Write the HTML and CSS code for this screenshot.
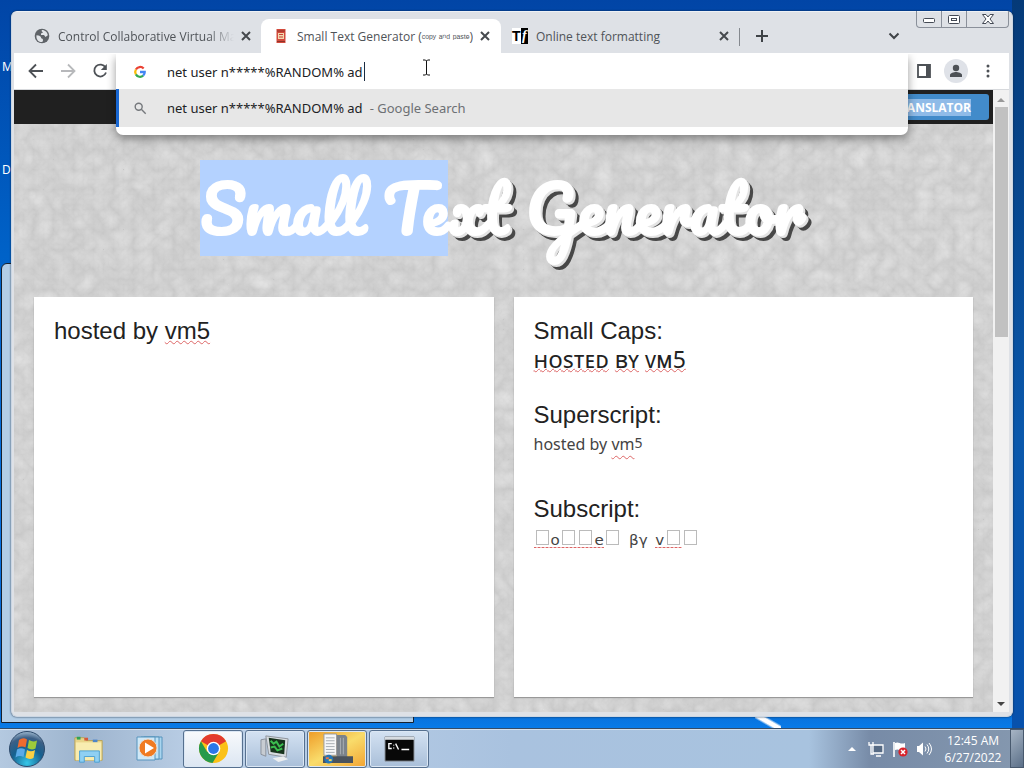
FILE: index.html
```html
<!DOCTYPE html>
<html lang="en">
<head>
<meta charset="utf-8">
<meta name="viewport" content="width=device-width, initial-scale=1">
<title>Small Text Generator</title>
<link rel="stylesheet" href="styles.css">
</head>
<body>
<div class="screen">
  <main class="desktop">
    <span class="desk-label label-top">My Computer</span>
    <span class="desk-label label-mid">Desktop</span>
    <div class="back-window"></div>
    <div class="streak"></div>

    <section class="window">
      <div class="caption">
        <button class="cap-btn" aria-label="Minimize"><svg width="14" height="10" viewBox="0 0 14 10"><rect x="1.500" y="4.500" width="11" height="4" rx="1" fill="#fff" stroke="#444a55"/></svg></button>
        <button class="cap-btn" aria-label="Restore"><svg width="14" height="11" viewBox="0 0 14 11"><rect x="1.500" y="1.500" width="11" height="8" rx="1" fill="#fff" stroke="#444a55"/><rect x="4.500" y="4.500" width="5" height="2" fill="#fff" stroke="#444a55"/></svg></button>
        <button class="cap-btn cap-close" aria-label="Close"><svg width="14" height="12" viewBox="0 0 14 12"><path d="M1.500 1.500h3.500l2 2.500 2-2.500h3.500L9 6l3.500 4.500H9L7 8l-2 2.500H1.500L5 6z" fill="#fff" stroke="#444a55"/></svg></button>
      </div>

      <header class="tabs">
        <div class="tab tab-first">
          <svg class="favicon" viewBox="0 0 16 16"><circle cx="8" cy="8" r="7.300" fill="#5f6368"/><path d="M2.500 7.200C4 7.200 7 8 7 9.500S9 10 9 12s-1 2-1.500 2C4 14 2 11 2.500 7.200zM8 2c3 0 5.500 2.500 5.800 5.200L11.500 9 10 7H7V5.500L9 4.500 7.500 3z" fill="#e2e5e9"/></svg>
          <span class="tab-title fade">Control Collaborative Virtual Mac</span>
          <button class="x" aria-label="Close tab"><svg viewBox="0 0 10 10"><path d="M1 1l8 8M9 1L1 9"/></svg></button>
        </div>
        <div class="tab tab-active">
          <svg class="favicon" viewBox="0 0 16 16"><path d="M3.500 1h9v14h-9z" fill="#d34a3c"/><path d="M5 5h6v6H5z" fill="#f3d9b0"/><path d="M4 3h8M4 13.500h8" stroke="#8f3229"/><path d="M6 6.500h4M6 9h4" stroke="#c4473a"/></svg>
          <span class="tab-title">Small Text Generator (<span class="tiny">ᶜᵒᵖʸ ᵃⁿᵈ ᵖᵃˢᵗᵉ</span>)</span>
          <button class="x" aria-label="Close tab"><svg viewBox="0 0 10 10"><path d="M1 1l8 8M9 1L1 9"/></svg></button>
        </div>
        <div class="tab tab-last">
          <span class="tf"><b>T</b><i>f</i></span>
          <span class="tab-title">Online text formatting</span>
          <button class="x" aria-label="Close tab"><svg viewBox="0 0 10 10"><path d="M1 1l8 8M9 1L1 9"/></svg></button>
        </div>
        <button class="new-tab" aria-label="New tab"><svg viewBox="0 0 12 12"><path d="M6 0v12M0 6h12"/></svg></button>
        <button class="tab-menu" aria-label="Search tabs"><svg viewBox="0 0 12 8"><path d="M1.500 1.500L6 6l4.500-4.500"/></svg></button>
      </header>

      <nav class="toolbar">
        <button class="tool" aria-label="Back"><svg viewBox="0 0 16 16"><path d="M15 8H2M8 1.500L1.500 8 8 14.500"/></svg></button>
        <button class="tool dim" aria-label="Forward"><svg viewBox="0 0 16 16"><path d="M1 8h13M8 1.500L14.500 8 8 14.500"/></svg></button>
        <button class="tool" aria-label="Reload"><svg viewBox="0 0 16 16"><path d="M13.500 4.500A6 6 0 1 0 14 9.500"/><path d="M14.800 1v6h-6z" fill="#4d5156" stroke="none"/></svg></button>
        <span class="grow"></span>
        <button class="tool" aria-label="Side panel"><svg viewBox="0 0 16 16"><path d="M2 2h12v12H2z"/><path d="M10 2h4v12h-4z" fill="#4d5156" stroke="none"/></svg></button>
        <button class="tool avatar" aria-label="Profile"><svg viewBox="0 0 16 16"><g fill="#4d5156" stroke="none"><circle cx="8" cy="5" r="3.200"/><path d="M2 14v-2c0-2 4-3 6-3s6 1 6 3v2z"/></g></svg></button>
        <button class="tool" aria-label="Menu"><svg viewBox="0 0 16 16"><g fill="#4d5156" stroke="none"><circle cx="8" cy="3" r="1.500"/><circle cx="8" cy="8" r="1.500"/><circle cx="8" cy="13" r="1.500"/></g></svg></button>
      </nav>

      <form class="omnibox">
        <label class="omni-row">
          <svg class="omni-icon" viewBox="0 0 16 16" fill="none" stroke-width="2.600"><path d="M12.200 4A5.500 5.500 0 0 0 3.300 5.200" stroke="#ea4335"/><path d="M3.300 5.200a5.500 5.500 0 0 0 0 5.600" stroke="#fbbc05"/><path d="M3.300 10.800a5.500 5.500 0 0 0 8.300 1.400" stroke="#34a853"/><path d="M11.600 12.200A5.500 5.500 0 0 0 13.400 8H8" stroke="#4285f4"/></svg>
          <input class="omni-input" type="text" aria-label="Address and search bar" value="net user n*****%RANDOM% ad">
          <span class="caret"></span>
        </label>
        <a class="omni-row suggestion" href="#">
          <svg class="omni-icon" viewBox="0 0 16 16" fill="none" stroke="#75787c" stroke-width="1.600"><circle cx="6.500" cy="6.500" r="4"/><path d="M9.500 9.500l5 5"/></svg>
          <span class="query">net user n*****%RANDOM% ad</span><span class="engine">- Google Search</span>
        </a>
      </form>
      <svg class="ibeam" viewBox="0 0 9 17"><path d="M1 1h2.500l1 1 1-1H8M4.500 2v13M1 16h2.500l1-1 1 1H8" fill="none" stroke="#111"/></svg>

      <div class="view">
        <article class="page">
          <svg class="texture" aria-hidden="true"><filter id="grain" x="0" y="0" width="100%" height="100%" color-interpolation-filters="sRGB"><feTurbulence type="turbulence" baseFrequency="0.050" numOctaves="4" seed="7"/><feColorMatrix values="0.09 0.05 0 0 0.775  0.09 0.05 0 0 0.775  0.09 0.05 0 0 0.775  0 0 0 0 1"/></filter><rect width="100%" height="100%" filter="url(#grain)"/></svg>
          <div class="site-bar"><a class="translator" href="#"><span>TRANSLATOR</span></a></div>
          <h1 class="title"><span class="selected">Small Te</span>xt Generator</h1>
          <div class="panels">
            <div class="panel"><p>hosted by <u>vm5</u></p></div>
            <div class="panel">
              <p>Small Caps:</p>
              <p class="caps"><u>ʜᴏsᴛᴇᴅ</u> <u>ʙʏ</u> <u>ᴠᴍ5</u></p>
              <p class="heading">Superscript:</p>
              <p class="super">hosted by <u>vm</u><small>5</small></p>
              <p class="heading-sub">Subscript:</p>
              <p class="sub"><span class="wavy"><i class="box"></i>ₒ<i class="box"></i><i class="box"></i>ₑ</span><i class="box"></i> <span class="greek">ᵦᵧ</span> <span class="wavy">ᵥ<i class="box"></i></span><i class="box"></i></p>
            </div>
          </div>
        </article>
        <div class="scroll"><span class="arrow up"></span><span class="thumb"></span><span class="arrow down"></span></div>
      </div>
    </section>
  </main>

  <footer class="taskbar">
    <button class="start" aria-label="Start"><svg viewBox="0 0 38 38"><defs><radialGradient id="orb" cx=".5" cy=".9" r=".9"><stop offset="0" stop-color="#35c6e8"/><stop offset=".5" stop-color="#16608f"/><stop offset=".8" stop-color="#3c5f85"/><stop offset="1" stop-color="#9db8cf"/></radialGradient></defs><circle cx="19" cy="19" r="17.500" fill="url(#orb)" stroke="#2d4a6b"/><path d="M11 10q4-3 8-.5l-1.500 8q-4-2-8 .5z" fill="#ee6b2f"/><path d="M21 10q4 2.500 8 .5l-1.500 8q-4 2-8-.5z" fill="#9ccb3b"/><path d="M9 19.500q4-2.500 8 0L15.500 27q-4-2-8 .5z" fill="#5baae8"/><path d="M19 20q4 2.500 8 0l-1.500 8q-4 2-8-.5z" fill="#fbd043"/></svg></button>
    <button class="pin" aria-label="Windows Explorer"><svg viewBox="0 0 34 30"><path d="M2 3h10l2 3h17v21H2z" fill="#e9d58a" stroke="#b7a35a"/><path d="M4 2h4v3H4z" fill="#31a354"/><path d="M12 3h4v3h-4z" fill="#d65a3a"/><path d="M21 5h5v3h-5z" fill="#4d86c8"/><path d="M3 8h27v19H3z" fill="#f8ecb0"/><path d="M7 29V17h21v12h-5v-6H12v6z" fill="#8fd0f3" stroke="#4a9fd2"/></svg></button>
    <button class="pin" aria-label="Media Player"><svg viewBox="0 0 30 30"><path d="M9 3h18v22H9z" fill="#a9d5ef" stroke="#5794bd"/><path d="M6 3h18v22H6z" fill="#bfe2f6" stroke="#5794bd"/><path d="M2 3h18v23H2z" fill="#cfe8f7" stroke="#5794bd"/><circle cx="13" cy="14" r="9" fill="#f07b22" stroke="#e5ded6"/><path d="M10 8.500l9 5.500-9 5.500z" fill="#fff"/></svg></button>
    <button class="task task-on" aria-label="Google Chrome"><svg viewBox="0 0 32 32"><circle cx="16" cy="16" r="15" fill="#fbc118"/><path d="M16 16L3 8.500a15 15 0 0 1 26 0z" fill="#e33b2e"/><path d="M3 8.500A15 15 0 0 0 15 31l6.500-11L16 16 9.500 19.700z" fill="#269a4b"/><circle cx="16" cy="16" r="7" fill="#fff"/><circle cx="16" cy="16" r="5.600" fill="#2b77e7"/></svg></button>
    <button class="task" aria-label="System monitor"><svg viewBox="0 0 32 32"><path d="M1 7l5-1v18l-5-2z" fill="#c7ccd2" stroke="#8a929c"/><path d="M6 3l23 3-2 19L9 22z" fill="#d8dce0" stroke="#8d949c"/><path d="M9 5l17 2.500L25 22l-14-2.500z" fill="#17331d"/><path d="M11 8l3 3 3-2 3 5 4-3M11 15l4-1 3 4 5-2" fill="none" stroke="#3bbd4e" stroke-width="2"/><path d="M13 26l11-2 5 3-10 3z" fill="#eceef0"/></svg></button>
    <button class="task task-hot" aria-label="Taskbar settings"><svg viewBox="0 0 32 32"><path d="M15 2h9l2 2v21H15z" fill="#7b838b"/><path d="M19 5v17M22 5v17" stroke="#a9afb5"/><path d="M2 1h13v22H2z" fill="#f6f7f7" stroke="#999"/><path d="M4 5h9M4 8h9M4 11h9M4 14h9M4 17h9M4 20h9" stroke="#a7adb3"/><path d="M1 24h31v7H1z" fill="#4b535c"/><circle cx="7" cy="27" r="4.500" fill="#2675b5"/><path d="M4 25h3v2H4z" fill="#ee7440"/><path d="M7 27h3v2H7z" fill="#f7d648"/></svg></button>
    <button class="task" aria-label="Command Prompt"><svg viewBox="0 0 32 28"><path d="M1 2h30v25H1z" fill="#080808" stroke="#8d959e"/><path d="M1 2h30v3H1z" fill="#d7dce1"/><path d="M8 9H5v5h3M10 10v1M10 13v1M12 9l3 6M18 15h8" fill="none" stroke="#fff" stroke-width="1.400"/></svg></button>
    <span class="grow"></span>
    <div class="tray">
      <span class="arrow tray-up"></span>
      <svg viewBox="0 0 16 16"><g fill="#566a84" stroke="#fff" stroke-width="1.300"><path d="M5 4h10v8H5zM8 15h5"/><path d="M1 1v3h4V1M3 4v9h3" fill="none"/></g></svg>
      <svg viewBox="0 0 16 16"><path d="M2 1v15" stroke="#fff" stroke-width="1.600"/><path d="M3 2c4-2 5 2 10 0v7c-5 2-6-2-10 0z" fill="#fff"/><circle cx="11" cy="11" r="4.600" fill="#d8232b"/><path d="M9 9l4 4M13 9l-4 4" stroke="#fff" stroke-width="1.500"/></svg>
      <svg viewBox="0 0 16 16"><path d="M1 5h2l4-3.500v13L3 11H1z" fill="#fff"/><path d="M9 5.500q2 2.500 0 5M11 3.500q3.500 4.500 0 9M13 2q5 6 0 12" fill="none" stroke="#fff"/></svg>
    </div>
    <time class="clock">12:45 AM<br>6/27/2022</time>
    <button class="show-desktop" aria-label="Show desktop"></button>
  </footer>
</div>
</body>
</html>
```
FILE: styles.css
```css
* { box-sizing: border-box; }
body { margin: 0; font-family: "Noto Sans", "Open Sans", sans-serif; font-size: 12px; color: #202124; }
button { border: 0; padding: 0; background: none; font: inherit; display: flex; align-items: center; justify-content: center; flex: none; }
p, h1 { margin: 0; font-weight: 400; }
.grow { flex: 1; }

.screen { height: 100vh; display: grid; grid-template-rows: 1fr 40px; }
.desktop { position: relative; display: flex; padding: 11px; background: linear-gradient(#0145a6, #0062c8 35%, #0873e4 75%, #0a5fc4 95%, #087be8); overflow: hidden; min-height: 0; }
.desktop::after { content: ""; position: absolute; z-index: 0; right: 0; top: 0; bottom: 0; width: 12px; background: linear-gradient(#053a78, #0a58ac 60%, #0751ac); }
.desk-label { position: absolute; left: 2px; color: #fff; white-space: nowrap; }
.label-top { top: 58px; }
.label-mid { top: 161px; }
.back-window { position: absolute; left: 1px; bottom: 5px; width: 413px; height: 460px; background: #b2cde6; border: 1px solid #17212e; border-radius: 6px 6px 0 0; }
.streak { position: absolute; left: 755px; bottom: 0; width: 26px; height: 11px; background: linear-gradient(30deg, transparent 35%, #fff 45%, #fff 60%, transparent 70%); }

.window { position: relative; z-index: 1; flex: 1; min-width: 0; display: flex; flex-direction: column; padding: 0 3px 4px 2px; background: #dee1e6; border: 1px solid #cbd6e3; border-top-color: #eef1f5; border-radius: 6px; box-shadow: 0 0 2px #10233c; }
.caption { position: absolute; right: 3px; top: -1px; display: flex; height: 17px; border: 1px solid #8a909a; border-top: 0; border-radius: 0 0 4px 4px; }
.cap-btn { width: 25px; border-right: 1px solid #8a909a; }
.cap-close { width: 41px; border-right: 0; }

.tabs { display: flex; height: 41px; padding: 7px 0 0 20px; flex: none; align-items: stretch; }
.tab { display: flex; align-items: center; min-width: 0; color: #4f5358; font-family: "Open Sans", sans-serif; }
.tab-first { width: 227px; }
.tab-active { width: 240px; padding-left: 12px; background: #fff; border-radius: 8px 8px 0 0; }
.tab-last { width: 239px; padding: 0 8px 0 11px; position: relative; }
.tab-last::after { content: ""; position: absolute; right: 0; top: 9px; height: 18px; width: 1px; background: #85898f; }
.favicon { width: 16px; height: 16px; flex: none; margin-right: 8px; }
.tab-title { flex: 1; min-width: 0; white-space: nowrap; overflow: hidden; }
.fade { -webkit-mask-image: linear-gradient(90deg, #000 85%, transparent); mask-image: linear-gradient(90deg, #000 85%, transparent); }
.tiny { font-size: 10px; }
.x { width: 16px; height: 16px; margin: 0 8px 0 4px; }
.tab-first .x { margin-right: 7px; }
.tab-last .x { margin-right: 0; }
.x svg { width: 10px; height: 10px; stroke: #45494d; stroke-width: 2; }
.tf { display: flex; width: 16px; height: 16px; margin-right: 8px; font: bold 14px/16px "Liberation Sans", sans-serif; color: #000; background: #fff; }
.tf i { flex: 1; text-align: center; background: #000; color: #fff; font-family: "Liberation Serif", serif; }
.new-tab { width: 44px; }
.new-tab svg { width: 12px; height: 12px; stroke: #3f4347; stroke-width: 2; }
.tab-menu { margin: 0 109px 0 auto; }
.tab-menu svg { width: 12px; height: 8px; fill: none; stroke: #3f4347; stroke-width: 2; }

.toolbar { display: flex; height: 37px; flex: none; align-items: center; gap: 8px; padding: 0 9px 1px 10px; background: #fff; border-bottom: 1px solid #d7d9dc; }
.tool { width: 24px; height: 24px; border-radius: 50%; }
.tool svg { width: 16px; height: 16px; fill: none; stroke: #4d5156; stroke-width: 1.800; }
.dim { opacity: 0.4; }
.avatar { background: #dfe2e8; }

.omnibox { position: absolute; z-index: 3; left: 104px; right: 104px; top: 42px; height: 81px; background: #fff; border-radius: 0 0 7px 7px; box-shadow: 0 4px 10px #0006; overflow: hidden; clip-path: inset(0 -20px -20px -20px); }
.omni-row { display: flex; align-items: center; height: 35px; padding-left: 17px; font-size: 13px; color: #202124; text-decoration: none; }
.omni-icon { width: 14px; height: 14px; margin-right: 20px; flex: none; }
.omni-input { width: 197px; border: 0; padding: 0; outline: 0; font: inherit; color: inherit; background: none; }
.caret { width: 1px; height: 19px; background: #1a2c42; }
.suggestion { height: 38px; background: #e7e7e7; border-left: 3px solid #1967d2; padding-left: 14px; }
.query { white-space: pre; }
.engine { margin-left: 7px; color: #6d7074; }
.ibeam { position: absolute; z-index: 4; left: 410px; top: 47px; width: 9px; height: 17px; }

.view { flex: 1; min-height: 0; display: grid; grid-template-columns: 1fr 16px; }
.page { position: relative; isolation: isolate; display: flex; flex-direction: column; min-width: 0; min-height: 0; background: #cdcdcd; }
.texture { position: absolute; z-index: -1; width: 100%; height: 100%; }
.site-bar { display: flex; justify-content: flex-end; height: 34px; flex: none; padding: 4px; background: #202020; }
.translator { display: flex; align-items: center; width: 120px; justify-content: flex-end; padding-right: 18px; border-radius: 3px; background: #428bca; color: #fff; font: bold 12px "Open Sans", sans-serif; text-decoration: none; }
.translator span { background: #8fbbe8; }
.title { flex: none; margin: 36px 0 41px; padding-right: 2px; text-align: center; white-space: nowrap; font: 700 64px/96px Pacifico, Lato, cursive; color: #fff; text-shadow: 2px 2px #e4e4e4, 3px 3px #484848, 5px 5px #484848; }
.selected { display: inline-block; background: #b4d2ff; text-shadow: none; }
.panels { flex: 1; min-height: 0; display: grid; grid-template-columns: 1fr 1fr; gap: 20px; padding: 0 20px 15px; }
.panel { min-width: 0; background: #fff; box-shadow: 0 1px 1px #999; padding: 20px; font: 24px/28px "Liberation Sans", Arial, sans-serif; color: #222; }
.panel u { text-decoration: underline wavy #d66 1px; text-underline-offset: 1px; text-decoration-skip-ink: none; }
.panel .caps { font: 23px/28px "Noto Sans", sans-serif; }
.panel .caps u { text-underline-offset: 0; }
.heading { margin-top: 28px; }
.panel .super { font: 16px/28px "Noto Sans", sans-serif; color: #444; }
.panel .super u { text-underline-offset: 5px; }
.super small { font-size: 14px; vertical-align: 2px; }
.heading-sub { margin-top: 37px; }
.panel .sub { font: 24px/28px "DejaVu Sans", sans-serif; color: #444; white-space: nowrap; }
.wavy { background: repeating-linear-gradient(90deg, #d66 0 2px, #f2bcbc 2px 4px) 0 24px / 100% 1px no-repeat; }
.box { display: inline-block; width: 13px; height: 15px; margin: 0 2px; border: 1px solid #bbb; }

.scroll { display: flex; flex-direction: column; align-items: center; background: #f1f1f1; }
.arrow { width: 0; height: 0; border: 4px solid transparent; flex: none; }
.up { margin: 4px 0 5px; border-bottom-color: #999; }
.thumb { width: 13px; height: 230px; background: #c1c1c1; }
.down { margin: auto 0 2px; border-top-color: #444; }

.taskbar { position: relative; z-index: 2; display: flex; align-items: center; padding-left: 7px; border-top: 1px solid #354c67; background: linear-gradient(90deg, #b4c9e0, #9db4ce 8%, #bdd1e8 20%, #a9c2df 50%, #a8c3df 79%, #778ba7 85%, #8598af); box-shadow: inset 0 1px #d4e1ef; }
.start { width: 40px; }
.start svg { width: 38px; height: 38px; }
.pin { width: 60px; margin-left: 12px; }
.pin svg { width: 32px; height: 30px; }
.pin + .pin { margin-left: 1px; }
.pin + .task { margin-left: 3px; }
.task { width: 60px; height: 38px; margin-right: 2px; border: 1px solid #56708f; border-radius: 3px; background: linear-gradient(#d4e2f2, #a9bfd9); box-shadow: inset 0 0 0 1px #dbe7f4; }
.task-on { background: linear-gradient(#f8fafc, #dce6f2); }
.task-hot { background: linear-gradient(150deg, #ee9a26, #f9dc6b 50%, #f2a332); }
.task svg { width: 31px; height: 31px; }
.tray { display: flex; align-items: center; gap: 8px; }
.tray svg { width: 16px; height: 16px; }
.tray-up { border-bottom-color: #fff; margin: 0 4px 4px 0; }
.clock { width: 74px; margin-left: 4px; text-align: center; line-height: 17px; color: #fff; font-family: "Open Sans", sans-serif; }
.show-desktop { width: 14px; height: 39px; border: 1px solid #48596e; background: linear-gradient(135deg, #a7b5c5, #5b6f88); }
```
